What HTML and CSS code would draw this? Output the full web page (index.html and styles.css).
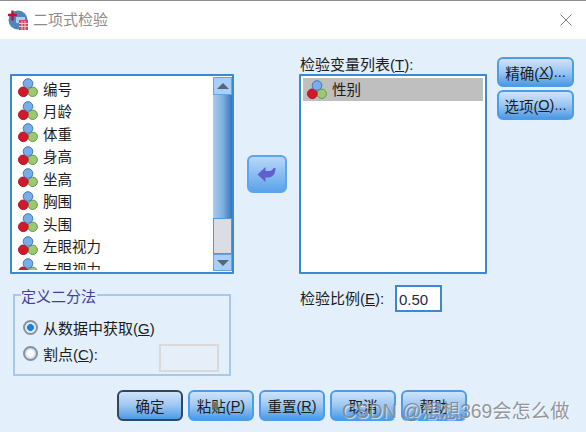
FILE: index.html
```html
<!DOCTYPE html>
<html lang="zh-CN">
    <head>
        <meta charset="UTF-8">
        <title>二项式检验</title>
        <link rel="stylesheet" href="styles.css">
    </head>
    <body>
        <svg class="defs" width="0" height="0">
            <symbol id="var-icon" viewBox="0 0 20 20">
                <circle cx="14.700" cy="13.800" r="4.700" fill="#9cc873" stroke="#5f9a3e"/>
                <circle cx="5.300" cy="13.800" r="4.800" fill="#d3182c" stroke="#a51826"/>
                <circle cx="10" cy="5.500" r="4.800" fill="#78ade8" stroke="#3d78bf"/>
            </symbol>
        </svg>
        <div class="titlebar">
            <svg class="app-icon" width="20" height="20" viewBox="0 0 20 20">
                <circle cx="10" cy="10" r="9.500" fill="#4d86bd"/>
                <rect x="8" y="7" width="9" height="6" fill="#a9cdea"/>
                <path d="M0 5h9M4.500 0.500v10" stroke="#c8102e" stroke-width="2.400" fill="none"/>
                <rect x="11" y="10" width="9" height="10" fill="#d9415f"/>
                <path d="M11 13.500h9M11 16.500h9M14 11v9M17 11v9" stroke="#f6c6d0" stroke-width="1"/>
            </svg>
            <span class="title">二项式检验</span>
            <svg class="close" width="12" height="12" viewBox="0 0 12 12">
                <path d="M0.500 0.500l11 11M11.500 0.500l-11 11" stroke="#7d7d7d" stroke-width="1" fill="none"/>
            </svg>
        </div>
        <div class="content">
            <div class="top">
                <div class="left">
                    <div class="source">
                        <ul class="var-list">
                            <li><svg class="var"><use href="#var-icon"/></svg>编号</li>
                            <li><svg class="var"><use href="#var-icon"/></svg>月龄</li>
                            <li><svg class="var"><use href="#var-icon"/></svg>体重</li>
                            <li><svg class="var"><use href="#var-icon"/></svg>身高</li>
                            <li><svg class="var"><use href="#var-icon"/></svg>坐高</li>
                            <li><svg class="var"><use href="#var-icon"/></svg>胸围</li>
                            <li><svg class="var"><use href="#var-icon"/></svg>头围</li>
                            <li><svg class="var"><use href="#var-icon"/></svg>左眼视力</li>
                            <li><svg class="var"><use href="#var-icon"/></svg>右眼视力</li>
                        </ul>
                        <div class="scrollbar">
                            <div class="scroll-btn"><span class="tri-up"></span></div>
                            <div class="scroll-track"></div>
                            <div class="scroll-thumb"></div>
                            <div class="scroll-btn down"><span class="tri-down"></span></div>
                        </div>
                    </div>
                    <div class="group">
                        <div class="group-title">定义二分法</div>
                        <div class="radio-row first">
                            <span class="radio on"></span>
                            <span>从数据中获取(<u>G</u>)</span>
                        </div>
                        <div class="radio-row">
                            <span class="radio"></span>
                            <span>割点(<u>C</u>):</span>
                            <span class="cut-input"></span>
                        </div>
                    </div>
                </div>
                <div class="arrow-btn">
                    <svg width="20" height="18" viewBox="0 0 20 18">
                        <path d="M0.500 9.500L8.500 2v4h4c2 0 3-1 4-3h2c0 6-3 9.500-7 9.500H8.500V17z" fill="#5f5fcf"/>
                    </svg>
                </div>
                <div class="right">
                    <div class="field-label">检验变量列表(<u>T</u>):</div>
                    <div class="target">
                        <div class="selected"><svg class="var"><use href="#var-icon"/></svg><span class="selected-text">性别</span></div>
                    </div>
                    <div class="ratio-row">
                        <span class="ratio-label">检验比例(<u>E</u>):</span>
                        <span class="ratio-input">0.50</span>
                    </div>
                </div>
                <div class="side">
                    <div class="btn side-btn">精确(<u>X</u>)...</div>
                    <div class="btn side-btn">选项(<u>O</u>)...</div>
                </div>
            </div>
            <div class="footer">
                <div class="btn default">确定</div>
                <div class="btn">粘贴(<u>P</u>)</div>
                <div class="btn">重置(<u>R</u>)</div>
                <div class="btn">取消</div>
                <div class="btn">帮助</div>
            </div>
        </div>
        <div class="watermark">CSDN @想想369会怎么做</div>
    </body>
</html>
```

FILE: styles.css
```css
* {
    box-sizing: border-box;
}
html, body {
    height: 100%;
}
body {
    margin: 0;
    overflow: hidden;
    position: relative;
    background-color: #e3effb;
    color: #1c1c1c;
    font-family: "Liberation Sans", "Noto Sans CJK SC", sans-serif;
    font-size: 14.5px;
}
.defs {
    display: block;
    height: 0;
}
.titlebar {
    display: flex;
    align-items: center;
    height: 39px;
    padding: 0 14px 0 8px;
    background-color: #fff;
    border-top: 1px solid #8f8f8f;
}
.title {
    margin-left: 5px;
    margin-bottom: 3px;
    font-size: 15px;
    color: #8c8c8c;
}
.close {
    margin-left: auto;
}
.content {
    padding: 16px 0 0 10px;
}
.top {
    display: flex;
    height: 321px;
}
.left {
    width: 224px;
    padding-top: 19px;
}
.source {
    display: flex;
    height: 200px;
    padding: 2px 0 2px 2px;
    background-color: #fff;
    border: 2px solid #3d87d3;
    border-radius: 1px;
}
.var-list {
    flex: 1;
    margin: -1px 0 0 0;
    padding: 0 0 0 4px;
    overflow: hidden;
    list-style: none;
}
.var-list li {
    display: flex;
    align-items: center;
    height: 22.5px;
}
.var {
    width: 20px;
    height: 20px;
    margin-right: 5px;
    flex: none;
}
.scrollbar {
    display: flex;
    flex-direction: column;
    width: 19px;
    margin: -1px 0 -1px 0;
}
.scroll-btn {
    display: flex;
    align-items: center;
    justify-content: center;
    height: 18px;
    background-color: #a6d0fb;
    border: 1px solid #5da5ee;
}
.scroll-btn.down {
    height: 17px;
}
.tri-up {
    border-left: 6px solid transparent;
    border-right: 6px solid transparent;
    border-bottom: 6px solid #5c6670;
}
.tri-down {
    border-left: 6px solid transparent;
    border-right: 6px solid transparent;
    border-top: 6px solid #5c6670;
}
.scroll-track {
    flex: 1;
    background: linear-gradient(to right, #a9cbef, #7fb0e2 50%, #3577b8);
}
.scroll-thumb {
    height: 36px;
    background-color: #dcdce4;
    border: 1px solid #7f8b9a;
    border-top-color: #4b9ae8;
}
.group {
    width: 218px;
    height: 82px;
    margin: 20px 0 0 3px;
    padding: 0 0 0 8px;
    border: 2px solid #a8c8e8;
    font-size: 15px;
}
.group-title {
    width: fit-content;
    height: 18px;
    margin: -7px 0 0 -2px;
    padding: 0 1px 0 0;
    line-height: 16px;
    color: #3f3f9e;
    background-color: #e3effb;
}
.radio-row {
    display: flex;
    align-items: center;
    height: 26px;
}
.radio-row.first {
    margin-top: 7px;
}
.radio {
    width: 15px;
    height: 15px;
    margin-right: 5px;
    border-radius: 50%;
    border: 2px solid #8a939c;
    background: radial-gradient(circle, #fff 35%, #bcd9f5 70%);
}
.radio.on {
    background: radial-gradient(circle, #1f7fd8 40%, #dbe9f7 48%);
}
.cut-input {
    width: 60px;
    height: 28px;
    margin-left: auto;
    margin-right: 10px;
    margin-top: 9px;
    border: 2px solid #d9d9d9;
    background-color: #e6eff9;
}
.arrow-btn {
    display: flex;
    align-items: center;
    justify-content: center;
    width: 40px;
    height: 38px;
    margin: 100px 0 0 13px;
    border: 2px solid #5da5ee;
    border-radius: 6px;
    background: linear-gradient(#b9d8fa, #5da3ea);
}
.right {
    width: 188px;
    margin-left: 12px;
}
.field-label {
    height: 19px;
    padding-left: 1px;
    line-height: 19px;
    font-size: 15px;
}
.target {
    height: 200px;
    padding: 2px;
    background-color: #fff;
    border: 2px solid #3d87d3;
    border-radius: 1px;
}
.selected {
    display: flex;
    align-items: center;
    height: 23px;
    padding-left: 4px;
    background-color: #bfbfbf;
}
.selected-text {
    margin-bottom: 2px;
}
.ratio-row {
    display: flex;
    align-items: center;
    margin-top: 11px;
}
.ratio-label {
    width: 96px;
    padding-left: 1px;
    margin-bottom: 3px;
    font-size: 15px;
}
.ratio-input {
    width: 47px;
    height: 27px;
    padding-left: 2px;
    line-height: 25px;
    font-size: 15px;
    background-color: #fff;
    border: 2px solid #3d87d3;
    color: #1c2a4a;
}
.side {
    display: flex;
    flex-direction: column;
    gap: 3px;
    width: 77px;
    margin: 2px 0 0 10px;
}
.btn {
    display: flex;
    align-items: center;
    justify-content: center;
    width: 66px;
    height: 31px;
    border: 2px solid #4c9ce8;
    border-radius: 6px;
    background: linear-gradient(#cfe3fa, #9cc7f2 50%, #4d9be6);
    white-space: nowrap;
}
.side-btn {
    width: 77px;
    height: 30px;
}
.default {
    border-color: #33475b;
}
.footer {
    display: flex;
    gap: 5px;
    margin: 14px 0 0 107px;
}
.watermark {
    position: absolute;
    left: 342px;
    top: 398px;
    font-size: 19.3px;
    line-height: 28px;
    white-space: nowrap;
    color: rgba(125, 125, 125, 0.8);
    text-shadow: 1px 1px 1px rgba(255, 255, 255, 0.7);
}
```
